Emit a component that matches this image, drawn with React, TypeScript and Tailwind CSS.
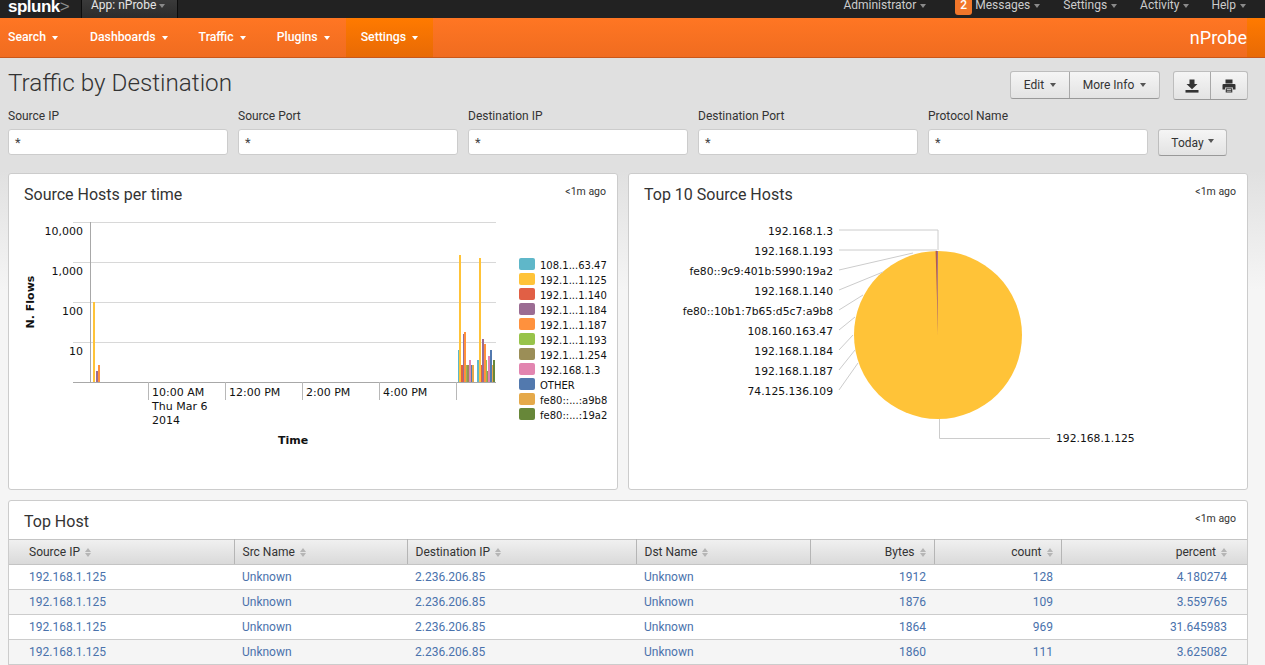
const navItems = ['Search', 'Dashboards', 'Traffic', 'Plugins', 'Settings']
const filters = ['Source IP', 'Source Port', 'Destination IP', 'Destination Port', 'Protocol Name']

const columns = [
  { label: 'Source IP', cls: 'w-[225px] pl-5 text-left' },
  { label: 'Src Name', cls: 'w-[173px] pl-2 text-left' },
  { label: 'Destination IP', cls: 'w-[229px] pl-2 text-left' },
  { label: 'Dst Name', cls: 'w-[174px] pl-2 text-left' },
  { label: 'Bytes', cls: 'w-[124px] pr-2 text-right' },
  { label: 'count', cls: 'w-[127px] pr-2 text-right' },
  { label: 'percent', cls: 'w-[186px] pr-5 text-right' },
]

const rows = [
  ['192.168.1.125', 'Unknown', '2.236.206.85', 'Unknown', '1912', '128', '4.180274'],
  ['192.168.1.125', 'Unknown', '2.236.206.85', 'Unknown', '1876', '109', '3.559765'],
  ['192.168.1.125', 'Unknown', '2.236.206.85', 'Unknown', '1864', '969', '31.645983'],
  ['192.168.1.125', 'Unknown', '2.236.206.85', 'Unknown', '1860', '111', '3.625082'],
]

const legend = [
  ['108.1...63.47', '#5fb7c9'],
  ['192.1...1.125', '#ffc338'],
  ['192.1...1.140', '#e15f45'],
  ['192.1...1.184', '#9b6c93'],
  ['192.1...1.187', '#ff913d'],
  ['192.1...1.193', '#98c34a'],
  ['192.1...1.254', '#9b8e57'],
  ['192.168.1.3', '#e285b0'],
  ['OTHER', '#5279ae'],
  ['fe80::...:a9b8', '#e5a94a'],
  ['fe80::...:19a2', '#678739'],
]

// x, width, top y, colour index
const bars: [number, number, number, number][] = [
  [93, 2, 302, 1], [96, 2, 371, 3], [98, 2, 365, 4],
  [458, 1, 350, 0], [459, 2, 255, 1], [461, 3, 365, 2], [463, 1, 334, 3], [464, 2, 332, 4],
  [466, 1, 365, 5], [467, 2, 365, 6], [469, 2, 360, 7], [471, 1, 365, 8], [472, 2, 365, 9],
  [477, 2, 360, 0], [479, 2, 258, 1], [481, 1, 365, 2], [482, 2, 339, 3], [484, 2, 344, 4],
  [486, 1, 360, 5], [487, 1, 371, 6], [488, 2, 356, 7], [490, 2, 350, 8], [492, 1, 365, 9], [493, 2, 360, 10],
]

const pieLabels: [string, number, string][] = [
  ['192.168.1.3', 230, '839,230 938,230 938,250'],
  ['192.168.1.193', 250, '839,250 937,250'],
  ['fe80::9c9:401b:5990:19a2', 270, '839,270 913,253'],
  ['192.168.1.140', 290, '839,290 883,272'],
  ['fe80::10b1:7b65:d5c7:a9b8', 310, '839,310 863,295'],
  ['108.160.163.47', 330, '839,330 855,317'],
  ['192.168.1.184', 350, '839,350 853,335'],
  ['192.168.1.187', 370, '839,370 855,350'],
  ['74.125.136.109', 390, '839,390 858,363'],
]

function Caret({ cls }: { cls: string }) {
  return <span className={`inline-block w-0 h-0 border-x-[3.5px] border-t-4 border-x-transparent ${cls}`} />
}

function SortIcon() {
  return (
    <span className="inline-flex flex-col gap-px ml-[5px] align-middle">
      <span className="w-0 h-0 border-x-[3.5px] border-b-4 border-x-transparent border-b-[#b5b5b5]" />
      <span className="w-0 h-0 border-x-[3.5px] border-t-4 border-x-transparent border-t-[#b5b5b5]" />
    </span>
  )
}

function TopBar() {
  const links: [string, string][] = [
    ['Administrator', ''],
    ['Messages', 'ml-[29px]'],
    ['Settings', 'ml-[23px]'],
    ['Activity', 'ml-[23px]'],
    ['Help', 'ml-[22px]'],
  ]
  return (
    <div className="h-[18px] bg-[#222222] overflow-hidden flex items-start relative text-[12px] leading-[11px] text-[#cccccc]">
      <div className="ml-2 -mt-[2px] w-[73px] text-[#ffffff] font-['Liberation_Sans',sans-serif] font-bold text-[17px] leading-[17px] tracking-[-0.5px]">
        splunk<span className="text-[#8c8c8c] font-normal">&gt;</span>
      </div>
      <div className="h-[18px] w-[97px] bg-gradient-to-b from-[#3a3a3a] to-[#2c2c2c] border-x border-[#0c0c0c] flex items-start pl-[9px] text-[#e6e6e6] gap-[3px]">
        App: nProbe
        <Caret cls="border-t-[#8a8a8a] mt-1" />
      </div>
      <div className="ml-auto pr-[19px] flex items-start">
        {links.map(([label, ml]) => (
          <div key={label} className={`flex items-start ${ml}`}>
            {label === 'Messages' && (
              <span className="w-[17px] h-[15px] rounded-b-[3px] bg-[#f2762a] text-white font-medium text-center mr-[3px]">2</span>
            )}
            <span>{label}</span>
            <Caret cls="border-t-[#8a8a8a] mt-1 ml-1" />
          </div>
        ))}
      </div>
    </div>
  )
}

function OrangeNav() {
  return (
    <div className="h-10 flex bg-gradient-to-b from-[#ff7623] to-[#f06c20] border-b border-[#c9571a] text-white">
      <nav className="flex text-[12.25px] font-medium">
        {navItems.map((item, i) => (
          <div
            key={item}
            className={`h-[39px] flex items-center gap-[6px] ${i === 0 ? 'pl-2 pr-4' : 'pl-4 pr-[15px]'} ${
              item === 'Settings' ? 'pl-[15px] pr-4 ml-px bg-gradient-to-b from-[#ff7a00] to-[#e86a05]' : ''
            }`}
          >
            {item}
            <Caret cls="border-t-white" />
          </div>
        ))}
      </nav>
      <div className="ml-auto h-[39px] flex items-center text-[18px]">nProbe</div>
      <div className="w-[18px] h-[39px] bg-gradient-to-b from-[#ff7a00] to-[#e86a05]" />
    </div>
  )
}

function DownloadIcon() {
  return (
    <svg width="14" height="14" viewBox="0 0 14 14" fill="#333333">
      <path d="M4.5 0.5h5v4.5h3L7 10.2 1.5 5h3z" />
      <rect x="0.5" y="11" width="13" height="2.6" />
    </svg>
  )
}

function PrintIcon() {
  return (
    <svg width="14" height="14" viewBox="0 0 14 14" fill="#333333">
      <path d="M3.5 0.5h7v4h-7z" />
      <path d="M1.5 5h11a1 1 0 0 1 1 1v4.5h-2.5V8.5H3v2H0.5V6a1 1 0 0 1 1-1z" />
      <path d="M3.7 9.3h6.6v4.2H3.7z" />
      <path d="M4.8 10.3h4.4v0.8H4.8zM4.8 11.8h4.4v0.7H4.8z" fill="#e8e8e8" />
    </svg>
  )
}

function TitleRow() {
  const btn = 'h-[26px] bg-gradient-to-b from-[#f5f5f5] to-[#e3e3e3] flex items-center justify-center text-[#333333] text-[12px]'
  return (
    <div className="h-[45px] flex items-start pl-2">
      <h1 className="text-[24.25px] font-light leading-[50px] text-[#333333]">Traffic by Destination</h1>
      <div className="ml-auto mt-[13px] flex border border-[#bdbdbd] border-b-[#999999] rounded-[3px] mr-[13px]">
        <div className={`${btn} w-[59px] gap-[6px] border-r border-[#a8a8a8] rounded-l-[3px]`}>
          Edit
          <Caret cls="border-t-[#555555]" />
        </div>
        <div className={`${btn} w-[89px] gap-[6px] rounded-r-[3px]`}>
          More Info
          <Caret cls="border-t-[#555555]" />
        </div>
      </div>
      <div className="mt-[13px] flex border border-[#bdbdbd] border-b-[#999999] rounded-[3px] mr-[17px]">
        <div className={`${btn} h-[27px] w-[37px] border-r border-[#a8a8a8] rounded-l-[3px]`}>
          <DownloadIcon />
        </div>
        <div className={`${btn} h-[27px] w-[36px] rounded-r-[3px]`}>
          <PrintIcon />
        </div>
      </div>
    </div>
  )
}

function Filters() {
  return (
    <div className="flex items-end gap-[10px] pl-2 h-[52px]">
      {filters.map(f => (
        <div key={f} className="w-[220px]">
          <div className="text-[12px] leading-[18px] mb-1 text-[#333333]">{f}</div>
          <div className="h-[26px] bg-white border border-[#cccccc] rounded-[3px] pl-[6px] text-[13px] leading-[26px] text-[#444444]">*</div>
        </div>
      ))}
      <div className="w-[69px] h-[27px] -mb-px flex items-center justify-center gap-1 bg-gradient-to-b from-[#f5f5f5] to-[#e3e3e3] border border-[#bdbdbd] border-b-[#999999] rounded-[3px] text-[12px] text-[#333333]">
        Today
        <Caret cls="border-t-[#555555] -mt-1" />
      </div>
    </div>
  )
}

function PanelHead({ title }: { title: string }) {
  return (
    <div className="h-9 flex items-start justify-between pl-[15px] pr-[11px] pt-[10px]">
      <h2 className="text-[16px] leading-[22px] text-[#333333]">{title}</h2>
      <span className="text-[10.5px] leading-[15px] text-[#333333]">&lt;1m ago</span>
    </div>
  )
}

function LineChart() {
  return (
    <svg width="608" height="270" viewBox="9 210 608 270" className="block font-['DejaVu_Sans',sans-serif] text-[11px]" fill="#111111">
      {[222, 262, 302, 342].map(y => (
        <line key={y} x1="73" x2="496" y1={y + 0.5} y2={y + 0.5} stroke="#d8d8d8" />
      ))}
      <line x1="90.5" x2="90.5" y1="222" y2="382" stroke="#a8a8a8" />
      <line x1="73" x2="496" y1="382.5" y2="382.5" stroke="#a8a8a8" />
      {[148, 225, 302, 379, 456].map(x => (
        <line key={x} x1={x + 0.5} x2={x + 0.5} y1="382" y2="400" stroke="#b8b8b8" />
      ))}
      {bars.map(([x, w, top, c], i) => (
        <rect key={i} x={x} y={top} width={w} height={382 - top} fill={legend[c][1]} />
      ))}
      {[['10,000', 235], ['1,000', 275], ['100', 315], ['10', 355]].map(([t, y]) => (
        <text key={t} x="83" y={y} textAnchor="end">{t}</text>
      ))}
      {[['10:00 AM', 152, 396], ['Thu Mar 6', 152, 410], ['2014', 152, 424], ['12:00 PM', 229, 396], ['2:00 PM', 306, 396], ['4:00 PM', 383, 396]].map(([t, x, y]) => (
        <text key={t} x={x} y={y}>{t}</text>
      ))}
      <text x="293" y="444" textAnchor="middle" fontWeight="bold" fontSize="11">Time</text>
      <text transform="translate(34 302) rotate(-90)" textAnchor="middle" fontWeight="bold" fontSize="11">N. Flows</text>
      {legend.map(([label, color], i) => (
        <g key={label}>
          <rect x="519" y={258 + i * 15} width="16" height="12" rx="2" fill={color} />
          <text x="540" y={269 + i * 15} fontSize="10">{label}</text>
        </g>
      ))}
    </svg>
  )
}

function PieChart() {
  return (
    <svg width="618" height="270" viewBox="629 210 618 270" className="block font-['DejaVu_Sans',sans-serif] text-[10.75px]" fill="#111111">
      <circle cx="938" cy="335" r="84" fill="#ffc338" />
      <path d="M938 335 L935.6 251 L937 251 Z" fill="#b55a4c" />
      <path d="M938 335 L937 251 L938 251 Z" fill="#9b6c93" />
      {pieLabels.map(([label, y, pts]) => (
        <g key={label}>
          <polyline points={pts} fill="none" stroke="#cccccc" />
          <text x="833" y={y + 5} textAnchor="end">{label}</text>
        </g>
      ))}
      <polyline points="939.5,419 939.5,438.5 1050,438.5" fill="none" stroke="#cccccc" />
      <text x="1056" y="442">192.168.1.125</text>
    </svg>
  )
}

function TopHostTable() {
  return (
    <table className="w-[1238px] table-fixed border-collapse text-[12px]">
      <thead>
        <tr className="h-[25px] bg-gradient-to-b from-[#f0f0f0] to-[#d9d9d9]">
          {columns.map((c, i) => (
            <th key={c.label} className={`${c.cls} font-normal text-[#333333] border-y border-[#c4c4c4] ${i < 6 ? 'border-r border-r-[#b5b5b5]' : ''}`}>
              {c.label}
              <SortIcon />
            </th>
          ))}
        </tr>
      </thead>
      <tbody>
        {rows.map((row, r) => (
          <tr key={r} className={`h-[25px] border-b border-[#cccccc] ${r % 2 ? 'bg-[#f5f5f5]' : 'bg-white'}`}>
            {row.map((cell, i) => (
              <td key={i} className={`${columns[i].cls} text-[#4a72ac]`}>{cell}</td>
            ))}
          </tr>
        ))}
      </tbody>
    </table>
  )
}

export default function App() {
  return (
    <div className="h-[665px] overflow-hidden font-['Roboto',sans-serif] bg-[linear-gradient(#e0e0e0_170px,#f5f5f5_290px)]">
      <TopBar />
      <OrangeNav />
      <TitleRow />
      <Filters />
      <div className="grid grid-cols-[610px_620px] gap-[10px] pl-2 pt-[18px]">
        <section className="bg-white border border-[#cccccc] rounded-[3px] h-[317px]">
          <PanelHead title="Source Hosts per time" />
          <LineChart />
        </section>
        <section className="bg-white border border-[#cccccc] rounded-[3px] h-[317px]">
          <PanelHead title="Top 10 Source Hosts" />
          <PieChart />
        </section>
      </div>
      <div className="ml-2 mt-[10px] w-[1240px] bg-white border border-[#cccccc] rounded-t-[3px]">
        <div className="h-[38px] flex items-start justify-between pl-[15px] pr-[11px] pt-[10px]">
          <h2 className="text-[16px] leading-[22px] text-[#333333]">Top Host</h2>
          <span className="text-[10.5px] leading-[15px] text-[#333333]">&lt;1m ago</span>
        </div>
        <TopHostTable />
      </div>
    </div>
  )
}
